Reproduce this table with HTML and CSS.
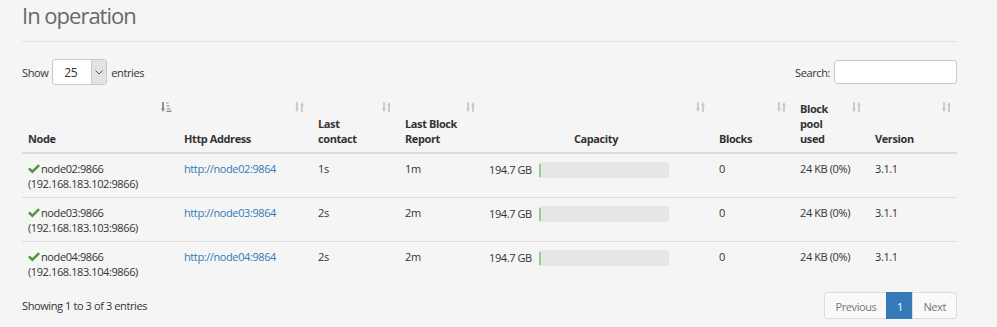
FILE: index.html
```html
<!DOCTYPE html>
<html>
<head>
<meta charset="utf-8">
<link rel="stylesheet" href="styles.css">
</head>
<body>
<div class="page">
  <h3 class="title">In operation</h3>
  <hr class="rule">
  <div class="controls">
    <label class="length">Show
      <span class="select"><span class="select-val">25</span><span class="select-btn"><svg width="8" height="5" viewBox="0 0 8 5"><path d="M0.5 0.5 L4 4 L7.5 0.5" fill="none" stroke="#555" stroke-width="1"/></svg></span></span>
      entries</label>
    <label class="search">Search: <span class="search-input"></span></label>
  </div>
  <table class="dt">
    <colgroup>
      <col class="c-node"><col class="c-http"><col class="c-contact"><col class="c-report"><col class="c-cap"><col class="c-blocks"><col class="c-pool"><col class="c-ver">
    </colgroup>
    <thead>
      <tr>
        <th>Node<span class="sort active"><svg width="11" height="10" viewBox="0 0 11 10"><path d="M2 0 V7" stroke="#888" stroke-width="1.8"/><path d="M0 6.5 H4 L2 10 Z" fill="#888"/><path d="M5.5 1 H7.5 M5.5 4 H8.5 M5.5 7 H9.5 M5.5 9.3 H10.5" stroke="#888" stroke-width="1.2"/></svg></span></th>
        <th>Http Address<span class="sort"><svg width="9" height="10" viewBox="0 0 9 10"><path d="M2 0 V7" stroke="#c8c8c8" stroke-width="1.8"/><path d="M0 6.5 H4 L2 10 Z" fill="#c8c8c8"/><path d="M7 3 V10" stroke="#c8c8c8" stroke-width="1.8"/><path d="M5 3.5 H9 L7 0 Z" fill="#c8c8c8"/></svg></span></th>
        <th>Last<br>contact<span class="sort"><svg width="9" height="10" viewBox="0 0 9 10"><path d="M2 0 V7" stroke="#c8c8c8" stroke-width="1.8"/><path d="M0 6.5 H4 L2 10 Z" fill="#c8c8c8"/><path d="M7 3 V10" stroke="#c8c8c8" stroke-width="1.8"/><path d="M5 3.5 H9 L7 0 Z" fill="#c8c8c8"/></svg></span></th>
        <th>Last Block<br>Report<span class="sort"><svg width="9" height="10" viewBox="0 0 9 10"><path d="M2 0 V7" stroke="#c8c8c8" stroke-width="1.8"/><path d="M0 6.5 H4 L2 10 Z" fill="#c8c8c8"/><path d="M7 3 V10" stroke="#c8c8c8" stroke-width="1.8"/><path d="M5 3.5 H9 L7 0 Z" fill="#c8c8c8"/></svg></span></th>
        <th class="center">Capacity<span class="sort"><svg width="9" height="10" viewBox="0 0 9 10"><path d="M2 0 V7" stroke="#c8c8c8" stroke-width="1.8"/><path d="M0 6.5 H4 L2 10 Z" fill="#c8c8c8"/><path d="M7 3 V10" stroke="#c8c8c8" stroke-width="1.8"/><path d="M5 3.5 H9 L7 0 Z" fill="#c8c8c8"/></svg></span></th>
        <th>Blocks<span class="sort"><svg width="9" height="10" viewBox="0 0 9 10"><path d="M2 0 V7" stroke="#c8c8c8" stroke-width="1.8"/><path d="M0 6.5 H4 L2 10 Z" fill="#c8c8c8"/><path d="M7 3 V10" stroke="#c8c8c8" stroke-width="1.8"/><path d="M5 3.5 H9 L7 0 Z" fill="#c8c8c8"/></svg></span></th>
        <th>Block<br>pool<br>used<span class="sort"><svg width="9" height="10" viewBox="0 0 9 10"><path d="M2 0 V7" stroke="#c8c8c8" stroke-width="1.8"/><path d="M0 6.5 H4 L2 10 Z" fill="#c8c8c8"/><path d="M7 3 V10" stroke="#c8c8c8" stroke-width="1.8"/><path d="M5 3.5 H9 L7 0 Z" fill="#c8c8c8"/></svg></span></th>
        <th>Version<span class="sort"><svg width="9" height="10" viewBox="0 0 9 10"><path d="M2 0 V7" stroke="#c8c8c8" stroke-width="1.8"/><path d="M0 6.5 H4 L2 10 Z" fill="#c8c8c8"/><path d="M7 3 V10" stroke="#c8c8c8" stroke-width="1.8"/><path d="M5 3.5 H9 L7 0 Z" fill="#c8c8c8"/></svg></span></th>
      </tr>
    </thead>
    <tbody>
      <tr>
        <td><svg class="ok" width="12" height="10" viewBox="0 0 12 10"><path d="M0 5.2 L1.8 3.4 L4.4 6 L10.2 0.2 L12 2 L4.4 9.6 Z" fill="#4a9a3a"/></svg>node02:9866<br>(192.168.183.102:9866)</td>
        <td><a href="#">http://node02:9864</a></td>
        <td>1s</td>
        <td>1m</td>
        <td><div class="cap"><span class="cap-text">194.7 GB</span><div class="bar"><div class="bar-fill"></div></div></div></td>
        <td>0</td>
        <td>24 KB (0%)</td>
        <td>3.1.1</td>
      </tr>
      <tr>
        <td><svg class="ok" width="12" height="10" viewBox="0 0 12 10"><path d="M0 5.2 L1.8 3.4 L4.4 6 L10.2 0.2 L12 2 L4.4 9.6 Z" fill="#4a9a3a"/></svg>node03:9866<br>(192.168.183.103:9866)</td>
        <td><a href="#">http://node03:9864</a></td>
        <td>2s</td>
        <td>2m</td>
        <td><div class="cap"><span class="cap-text">194.7 GB</span><div class="bar"><div class="bar-fill"></div></div></div></td>
        <td>0</td>
        <td>24 KB (0%)</td>
        <td>3.1.1</td>
      </tr>
      <tr>
        <td><svg class="ok" width="12" height="10" viewBox="0 0 12 10"><path d="M0 5.2 L1.8 3.4 L4.4 6 L10.2 0.2 L12 2 L4.4 9.6 Z" fill="#4a9a3a"/></svg>node04:9866<br>(192.168.183.104:9866)</td>
        <td><a href="#">http://node04:9864</a></td>
        <td>2s</td>
        <td>2m</td>
        <td><div class="cap"><span class="cap-text">194.7 GB</span><div class="bar"><div class="bar-fill"></div></div></div></td>
        <td>0</td>
        <td>24 KB (0%)</td>
        <td>3.1.1</td>
      </tr>
    </tbody>
  </table>
  <div class="footer">
    <div class="info">Showing 1 to 3 of 3 entries</div>
    <ul class="pager">
      <li class="pg disabled">Previous</li>
      <li class="pg current">1</li>
      <li class="pg disabled">Next</li>
    </ul>
  </div>
</div>
</body>
</html>
```
FILE: styles.css
```css
html, body {
  margin: 0;
  padding: 0;
}
body {
  background: #f5f5f5;
  font-family: "Open Sans", "DejaVu Sans", sans-serif;
  font-size: 11px;
  letter-spacing: -0.4px;
  color: #333;
}
.page {
  width: 935px;
  padding-left: 22px;
}
.title {
  margin: 0;
  padding-top: 1px;
  font-size: 22px;
  letter-spacing: -1px;
  line-height: 28px;
  font-weight: 400;
  color: #686868;
}
.rule {
  border: 0;
  border-top: 1px solid #e2e2e2;
  margin: 12px 0 0;
  height: 0;
}
.controls {
  display: flex;
  justify-content: space-between;
  align-items: center;
  margin-top: 17px;
  height: 26px;
}
.length, .search {
  display: flex;
  align-items: center;
  gap: 4px;
}
.select {
  display: flex;
  width: 55px;
  height: 26px;
  box-sizing: border-box;
  border: 1px solid #c9c9c9;
  border-radius: 3px;
  background: #fff;
  overflow: hidden;
}
.select-val {
  flex: 1;
  padding-left: 11px;
  line-height: 26px;
  font-size: 12px;
}
.select-btn {
  width: 14px;
  background: #e3e3e3;
  border-left: 1px solid #c9c9c9;
  display: flex;
  align-items: center;
  justify-content: center;
}
.search-input {
  display: block;
  width: 123px;
  height: 24px;
  box-sizing: border-box;
  border: 1px solid #c9c9c9;
  border-radius: 3px;
  background: #fff;
}
.dt {
  margin-top: 12px;
  width: 935px;
  table-layout: fixed;
  border-collapse: collapse;
}
.c-node { width: 154px; }
.c-http { width: 134px; }
.c-contact { width: 87px; }
.c-report { width: 84px; }
.c-cap { width: 230px; }
.c-blocks { width: 81px; }
.c-pool { width: 75px; }
.c-ver { width: 90px; }
.dt th {
  position: relative;
  text-align: left;
  vertical-align: bottom;
  font-weight: 700;
  line-height: 15px;
  padding: 4px 8px 6px 8px;
  border-bottom: 2px solid #dcdcdc;
}
.dt th:first-child,
.dt td:first-child {
  padding-left: 6px;
}
.dt th.center {
  text-align: center;
}
.sort {
  position: absolute;
  top: 5px;
  right: 6px;
  line-height: 0;
}
.sort.active {
  right: 4px;
}
.dt td {
  vertical-align: top;
  line-height: 15px;
  padding: 7px 8px 6px 8px;
  border-top: 1px solid #dcdcdc;
}
.dt tbody tr:first-child td {
  border-top: 0;
}
.ok {
  vertical-align: -1px;
  margin-right: 1px;
}
a {
  color: #337ab7;
  text-decoration: none;
}
.cap {
  display: flex;
  align-items: center;
}
.cap-text {
  width: 50px;
  flex: none;
}
.bar {
  width: 130px;
  height: 16px;
  background: #e6e6e6;
  border-radius: 3px;
  display: flex;
  align-items: center;
  margin-top: 1px;
}
.bar-fill {
  width: 2px;
  height: 13px;
  background: #8fd08f;
}
.footer {
  display: flex;
  justify-content: space-between;
  align-items: center;
  margin-top: 7px;
}
.pager {
  display: flex;
  list-style: none;
  margin: 0;
  padding: 0;
}
.pg {
  height: 27px;
  line-height: 27px;
  box-sizing: border-box;
  border: 1px solid #dcdcdc;
  margin-left: -1px;
  padding: 0 10px;
  background: #fff;
  color: #777;
}
.pg:first-child {
  border-radius: 3px 0 0 3px;
}
.pg:last-child {
  border-radius: 0 3px 3px 0;
}
.pg.disabled {
  background: #f9f9f9;
}
.pg.current {
  background: #337ab7;
  border-color: #337ab7;
  color: #fff;
  width: 27px;
  padding: 0;
  text-align: center;
}
```
